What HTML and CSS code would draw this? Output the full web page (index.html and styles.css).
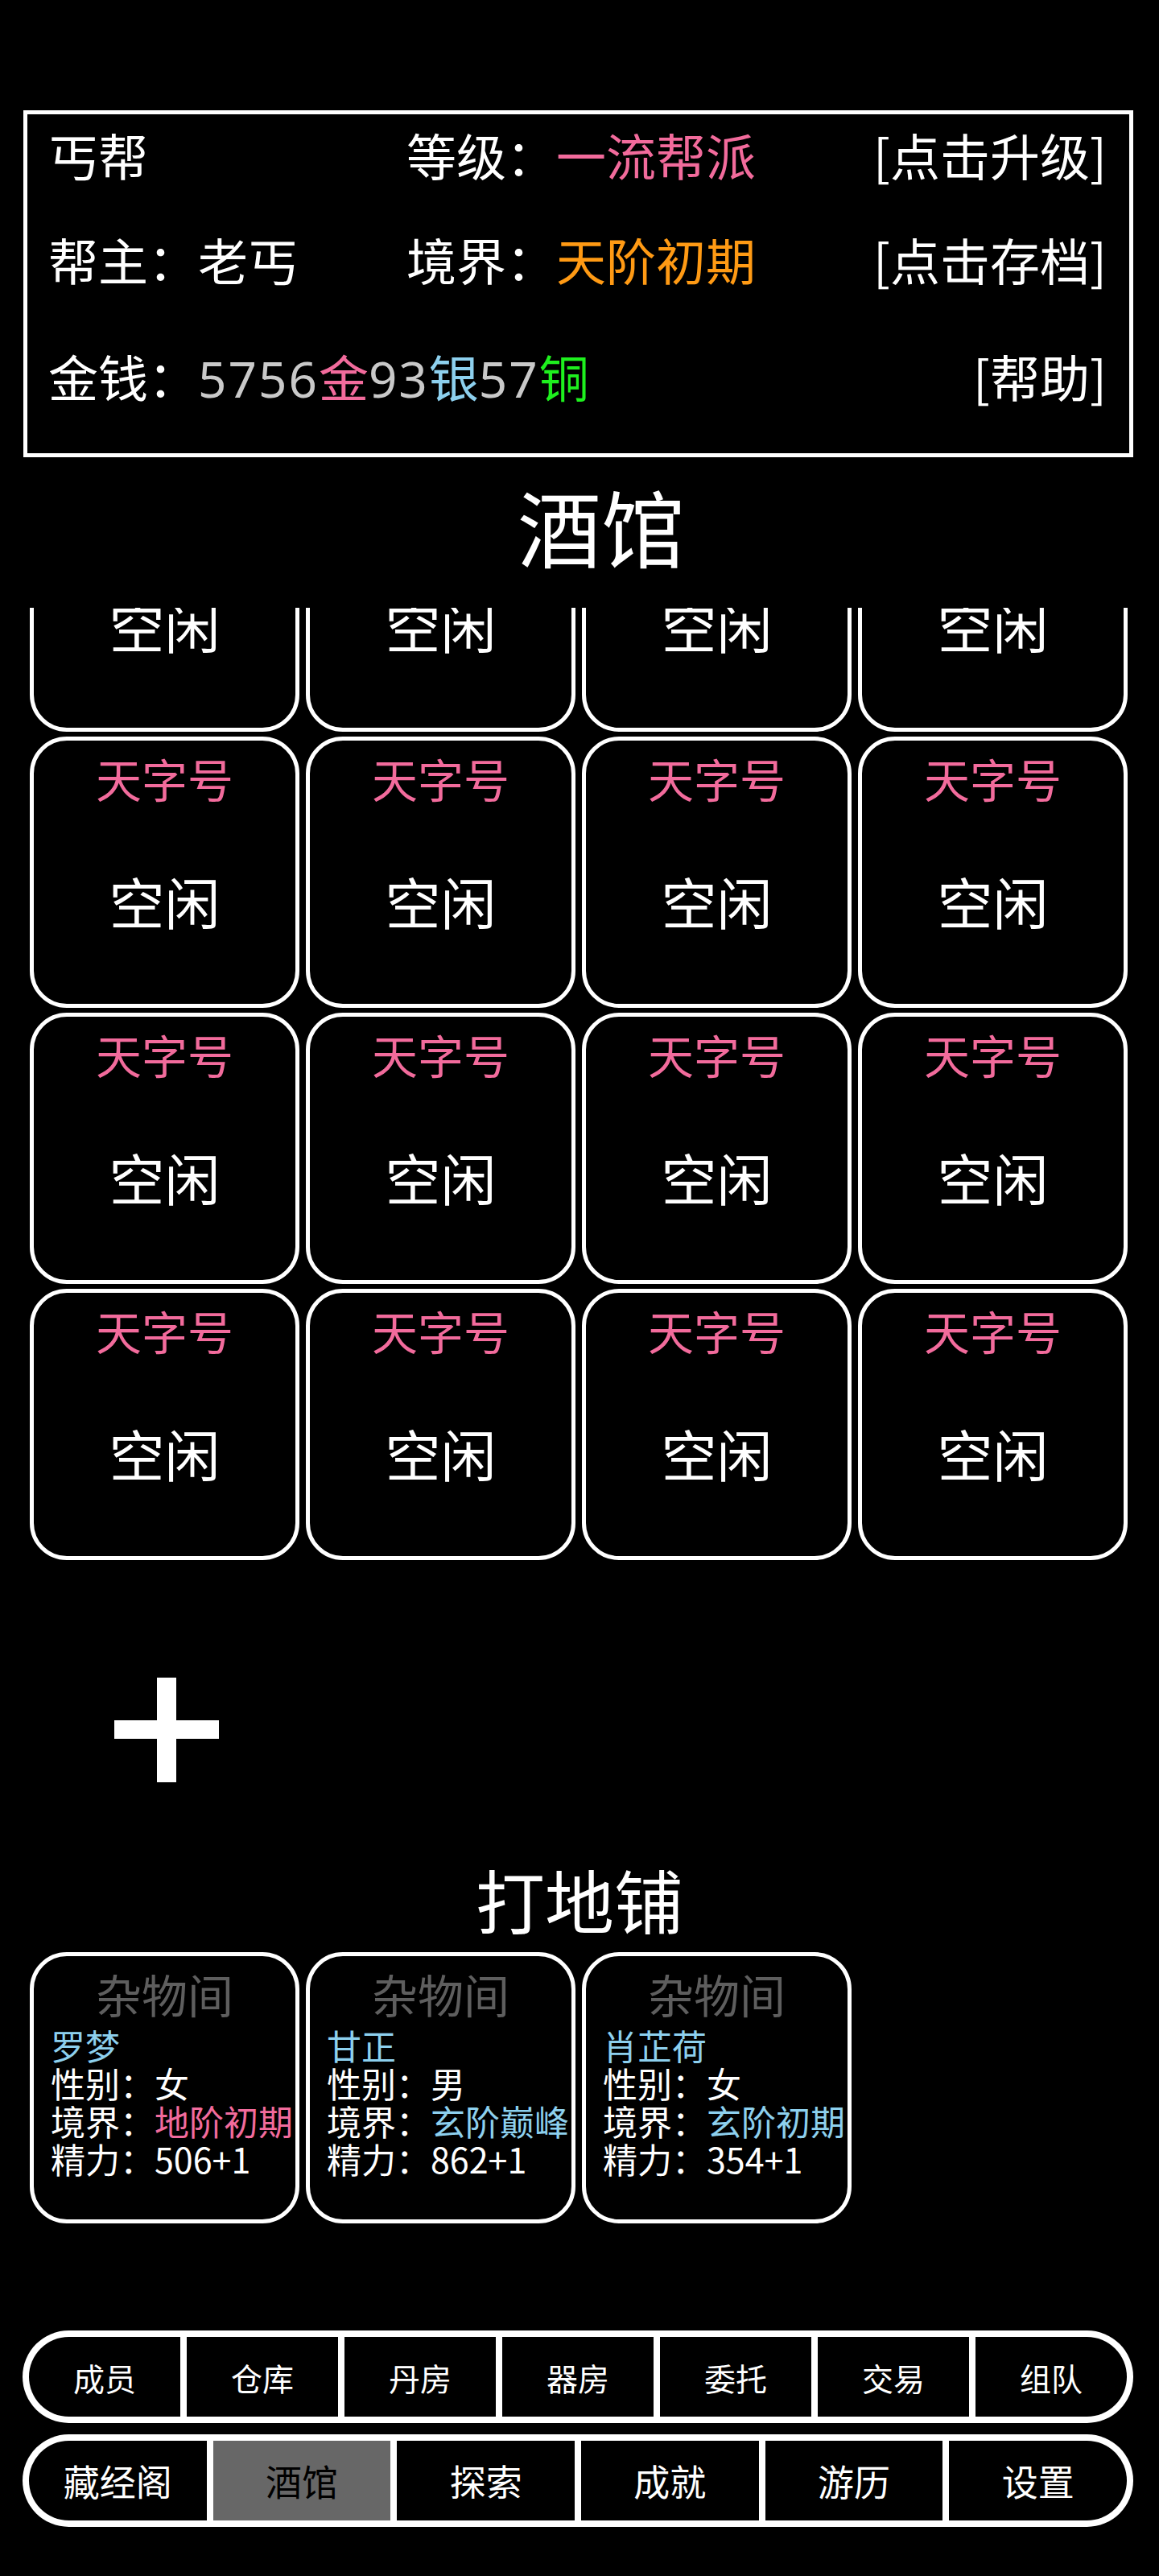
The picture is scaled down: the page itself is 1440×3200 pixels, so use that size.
FILE: index.html
```html
<!DOCTYPE html>
<html lang="zh-CN">
<head>
  <meta charset="UTF-8"/>
  <meta name="viewport" content="width=device-width,initial-scale=1.0"/>
  <title>酒馆</title>
  <link rel="stylesheet" href="styles.css">
</head>
<body>

  <div class="status">
    <div class="status-row row-1">
      <span>丐帮</span>
      <span>等级：<em class="pink">一流帮派</em></span>
      <span class="action">[点击升级]</span>
    </div>
    <div class="status-row row-2">
      <span>帮主：老丐</span>
      <span>境界：<em class="orange">天阶初期</em></span>
      <span class="action">[点击存档]</span>
    </div>
    <div class="status-row row-3">
      <span class="money">金钱：<em class="grey num">5756</em><em class="pink">金</em><em class="grey num">93</em><em class="blue">银</em><em class="grey num">57</em><em class="green">铜</em></span>
      <span></span>
      <span class="action">[帮助]</span>
    </div>
  </div>

  <h1 class="title tavern-title">酒馆</h1>

  <div class="rooms-view">
    <div class="rooms">
      <div class="room"><div class="room-name">天字号</div><div class="room-state">空闲</div></div>
      <div class="room"><div class="room-name">天字号</div><div class="room-state">空闲</div></div>
      <div class="room"><div class="room-name">天字号</div><div class="room-state">空闲</div></div>
      <div class="room"><div class="room-name">天字号</div><div class="room-state">空闲</div></div>

      <div class="room"><div class="room-name">天字号</div><div class="room-state">空闲</div></div>
      <div class="room"><div class="room-name">天字号</div><div class="room-state">空闲</div></div>
      <div class="room"><div class="room-name">天字号</div><div class="room-state">空闲</div></div>
      <div class="room"><div class="room-name">天字号</div><div class="room-state">空闲</div></div>

      <div class="room"><div class="room-name">天字号</div><div class="room-state">空闲</div></div>
      <div class="room"><div class="room-name">天字号</div><div class="room-state">空闲</div></div>
      <div class="room"><div class="room-name">天字号</div><div class="room-state">空闲</div></div>
      <div class="room"><div class="room-name">天字号</div><div class="room-state">空闲</div></div>

      <div class="room"><div class="room-name">天字号</div><div class="room-state">空闲</div></div>
      <div class="room"><div class="room-name">天字号</div><div class="room-state">空闲</div></div>
      <div class="room"><div class="room-name">天字号</div><div class="room-state">空闲</div></div>
      <div class="room"><div class="room-name">天字号</div><div class="room-state">空闲</div></div>
    </div>
  </div>

  <div class="add-row">
    <button class="add-btn" aria-label="添加">
      <svg viewBox="0 0 130 130" width="130" height="130">
        <rect x="53" y="0" width="24" height="130" fill="#fff"/>
        <rect x="0" y="53" width="130" height="23" fill="#fff"/>
      </svg>
    </button>
  </div>

  <h2 class="title floor-title">打地铺</h2>

  <div class="floor">
    <div class="bed">
      <div class="bed-name">杂物间</div>
      <div class="bed-info">
        <div class="blue">罗梦</div>
        <div>性别：女</div>
        <div>境界：<em class="pink">地阶初期</em></div>
        <div>精力：506+1</div>
      </div>
    </div>
    <div class="bed">
      <div class="bed-name">杂物间</div>
      <div class="bed-info">
        <div class="blue">甘正</div>
        <div>性别：男</div>
        <div>境界：<em class="blue">玄阶巅峰</em></div>
        <div>精力：862+1</div>
      </div>
    </div>
    <div class="bed">
      <div class="bed-name">杂物间</div>
      <div class="bed-info">
        <div class="blue">肖芷荷</div>
        <div>性别：女</div>
        <div>境界：<em class="blue">玄阶初期</em></div>
        <div>精力：354+1</div>
      </div>
    </div>
  </div>

  <nav class="tabs tabs-top">
    <button class="tab">成员</button>
    <button class="tab">仓库</button>
    <button class="tab">丹房</button>
    <button class="tab">器房</button>
    <button class="tab">委托</button>
    <button class="tab">交易</button>
    <button class="tab">组队</button>
  </nav>

  <nav class="tabs tabs-main">
    <button class="tab">藏经阁</button>
    <button class="tab active">酒馆</button>
    <button class="tab">探索</button>
    <button class="tab">成就</button>
    <button class="tab">游历</button>
    <button class="tab">设置</button>
  </nav>

</body>
</html>
```

FILE: styles.css
```css
:root {
  --bg:     #000000;
  --fg:     #ffffff;
  --pink:   #f26b9c;
  --orange: #ff9a14;
  --blue:   #8dd0ee;
  --green:  #1ef01e;
  --grey:   #c9c9c9;
  --dim:    #5e5e5e;
}
*,*::before,*::after { box-sizing:border-box; margin:0; padding:0 }
body {
  background: var(--bg);
  color: var(--fg);
  font-family: "Noto Sans CJK SC", "Noto Sans", sans-serif;
  width: 1440px;
  min-height: 3200px;
  padding-top: 137px;
}
em { font-style: normal }
.pink   { color: var(--pink) }
.orange { color: var(--orange) }
.blue   { color: var(--blue) }
.green  { color: var(--green) }
.grey   { color: var(--grey) }
.num    { font-family: "Noto Sans", "Noto Sans CJK SC", sans-serif; letter-spacing: 2px }

/* top status box */
.status {
  margin: 0 32px 0 29px;
  height: 431px;
  border: 5px solid var(--fg);
  padding: 0 28px 0 26px;
}
.status-row {
  display: grid;
  grid-template-columns: 445px 1fr auto;
  font-size: 62px;
  line-height: 100px;
  white-space: nowrap;
}
.row-2 { margin-top: 30px }
.row-3 { margin-top: 45px }
.action { text-align: right }

/* section titles */
.title {
  font-weight: 400;
  text-align: center;
}
.tavern-title {
  font-size: 104px;
  line-height: 150px;
  margin-top: 10px;
  margin-bottom: 27px;
  padding-left: 54px;
}
.floor-title {
  font-size: 86px;
  line-height: 120px;
  margin-top: 85px;
}

/* tavern rooms, scrolled part-way */
.rooms-view {
  height: 1185px;
  overflow: hidden;
  margin: 0 39px 0 37px;
}
.rooms {
  margin-top: -183px;
  display: grid;
  grid-template-columns: repeat(4, 1fr);
  column-gap: 8px;
  row-gap: 6px;
}
.room, .bed {
  height: 337px;
  border: 5px solid var(--fg);
  border-radius: 46px;
  display: flex;
  flex-direction: column;
}
.room { align-items: center }
.room-name {
  padding-top: 11px;
  font-size: 57px;
  line-height: 70px;
  color: var(--pink);
}
.room-state {
  margin-top: 78px;
  font-size: 69px;
  line-height: 80px;
}

.add-row {
  margin: 144px 39px 0 37px;
  display: grid;
  grid-template-columns: repeat(4, 1fr);
  column-gap: 8px;
}
.add-btn {
  background: none;
  border: none;
  height: 130px;
  display: flex;
  justify-content: center;
  padding-left: 4px;
  cursor: pointer;
}
.add-btn svg { display: block }

/* floor beds */
.floor {
  margin: 6px 39px 0 37px;
  display: grid;
  grid-template-columns: repeat(4, 1fr);
  column-gap: 8px;
}
.bed-name {
  padding-top: 11px;
  text-align: center;
  font-size: 57px;
  line-height: 70px;
  color: var(--dim);
}
.bed-info {
  margin-top: 6px;
  padding-left: 21px;
  font-size: 43px;
  line-height: 47px;
  white-space: nowrap;
}

/* bottom tab bars */
.tabs {
  margin: 0 32px 0 28px;
  height: 115px;
  background: var(--fg);
  border-radius: 58px;
  padding: 8px;
  display: flex;
  gap: 8px;
}
.tabs-top { margin-top: 133px }
.tabs-main { margin-top: 14px }
.tab {
  flex: 1;
  background: var(--bg);
  color: var(--fg);
  border: none;
  font-family: inherit;
  cursor: pointer;
}
.tab:first-child { border-radius: 50px 0 0 50px }
.tab:last-child  { border-radius: 0 50px 50px 0 }
.tabs-top .tab  { font-size: 39px }
.tabs-main .tab { font-size: 45px }
.tab.active {
  background: #676767;
  color: var(--bg);
}
```
